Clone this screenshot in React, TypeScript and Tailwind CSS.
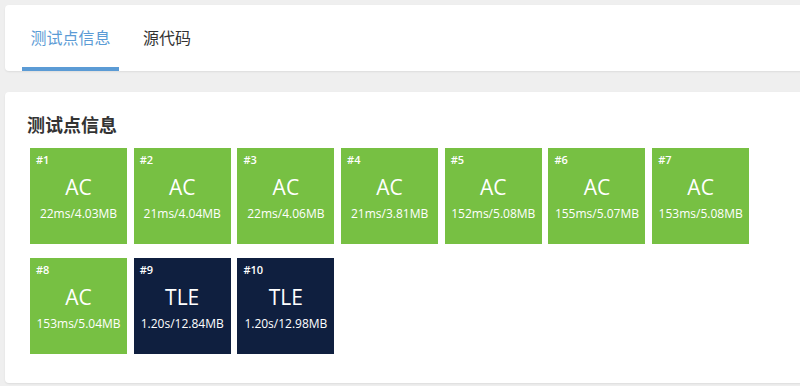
import React from 'react';

type Case = { id: number; status: 'AC' | 'TLE'; info: string };

const cases: Case[] = [
  { id: 1, status: 'AC', info: '22ms/4.03MB' },
  { id: 2, status: 'AC', info: '21ms/4.04MB' },
  { id: 3, status: 'AC', info: '22ms/4.06MB' },
  { id: 4, status: 'AC', info: '21ms/3.81MB' },
  { id: 5, status: 'AC', info: '152ms/5.08MB' },
  { id: 6, status: 'AC', info: '155ms/5.07MB' },
  { id: 7, status: 'AC', info: '153ms/5.08MB' },
  { id: 8, status: 'AC', info: '153ms/5.04MB' },
  { id: 9, status: 'TLE', info: '1.20s/12.84MB' },
  { id: 10, status: 'TLE', info: '1.20s/12.98MB' },
];

const CaseBox = ({ item }: { item: Case }) => {
  const bg = item.status === 'AC' ? 'bg-[#77c043]' : 'bg-[#0f1f3f]';
  return (
    <div className={`${bg} relative w-[97px] h-[96px] text-white flex flex-col items-center`}>
      <span className="absolute left-[6px] top-[5px] text-[11px] font-semibold leading-[14px]">#{item.id}</span>
      <span className="mt-[26px] text-[21px] leading-[26px]">{item.status}</span>
      <span className="mt-[6px] text-[12px] leading-[16px]">{item.info}</span>
    </div>
  );
};

const App = () => {
  return (
    <div className="w-[800px] h-[386px] bg-[#efefef] pt-[5px] pl-[5px] overflow-hidden font-['Open_Sans','Noto_Sans_CJK_SC',sans-serif]">
      <div className="w-[805px] h-[66px] bg-white rounded-[4px] shadow-[0_1px_2px_rgba(0,0,0,0.08)] flex pl-[17px]">
        <div className="relative w-[97px] flex items-center justify-center text-[16px] text-[#5b9bd5]">
          测试点信息
          <div className="absolute left-0 right-0 bottom-0 h-[4px] bg-[#5b9bd5]" />
        </div>
        <div className="ml-[24px] flex items-center text-[16px] text-[#333]">源代码</div>
      </div>
      <div className="mt-[21px] w-[805px] h-[291px] bg-white rounded-[4px] shadow-[0_1px_2px_rgba(0,0,0,0.08)] pl-[22px] pt-[21px]">
        <h2 className="text-[18px] font-bold text-[#333] leading-[24px]">测试点信息</h2>
        <div className="mt-[11px] ml-[3px] w-[730px] flex flex-wrap gap-x-[6.7px] gap-y-[14px]">
          {cases.map((c) => (
            <CaseBox key={c.id} item={c} />
          ))}
        </div>
      </div>
    </div>
  );
};

export default App;
